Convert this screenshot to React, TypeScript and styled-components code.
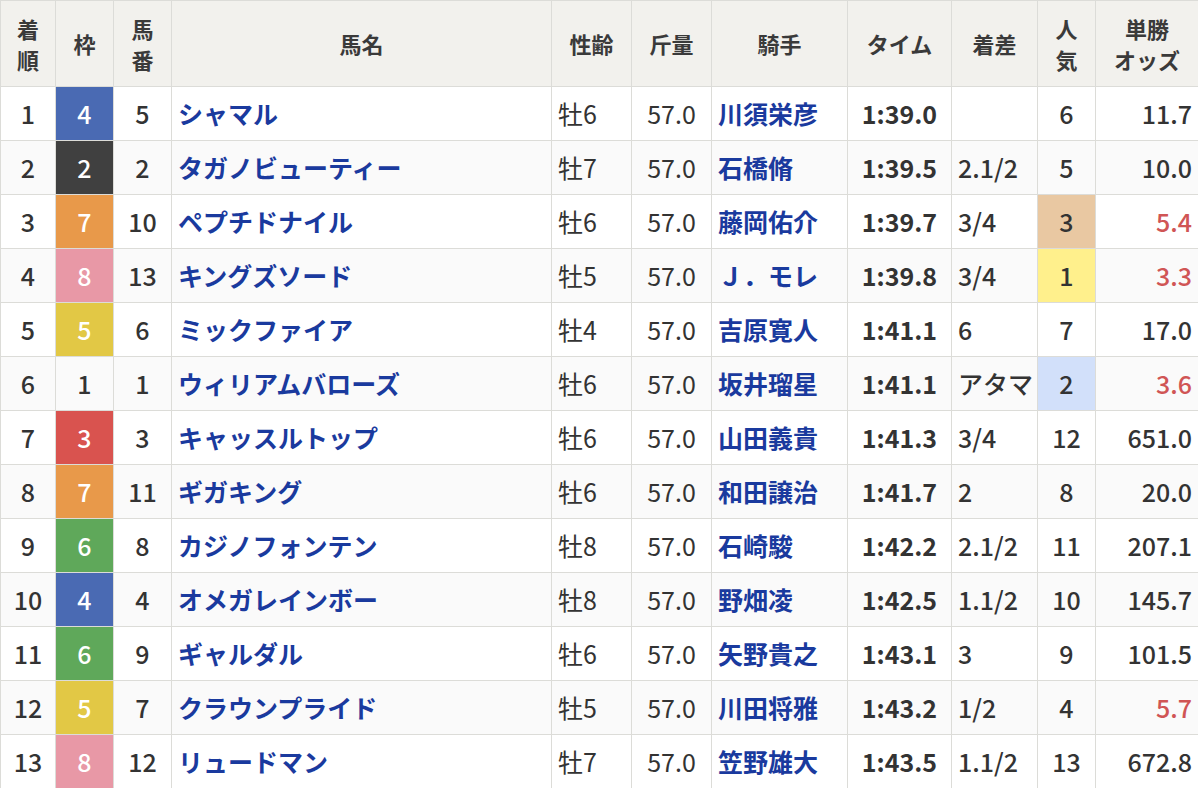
import React from 'react';
import styled, { createGlobalStyle } from 'styled-components';

const GlobalStyle = createGlobalStyle`
  body {
    margin: 0;
    background: #fff;
    font-family: "Noto Sans CJK JP", "Noto Sans", sans-serif;
    color: #333;
  }
`;

const Table = styled.table`
  width: 1198px;
  border-collapse: collapse;
  table-layout: fixed;
`;

const Th = styled.th`
  background: #f2f1ed;
  border: 1px solid #dcdcd8;
  height: 85px;
  font-size: 22px;
  font-weight: 700;
  line-height: 31px;
  color: #3a3a3a;
  text-align: center;
  padding: 0;
`;

const Row = styled.tr<{ $odd: boolean }>`
  background: ${(p) => (p.$odd ? '#fff' : '#fafafa')};
`;

const Td = styled.td<{ $align?: string; $weight?: number; $blue?: boolean; $bg?: string; $fg?: string }>`
  border: 1px solid #dcdcd8;
  height: 53px;
  padding: 0 6px;
  font-size: 25px;
  line-height: 1;
  text-align: ${(p) => p.$align || 'center'};
  font-weight: ${(p) => p.$weight || 500};
  color: ${(p) => p.$fg || (p.$blue ? '#1a3a9e' : '#333')};
  background: ${(p) => p.$bg || 'transparent'};
  white-space: nowrap;
  overflow: hidden;
`;

const wakuColor: Record<number, [string, string]> = {
  1: ['transparent', '#333'],
  2: ['#404040', '#fff'],
  3: ['#d9534f', '#fff'],
  4: ['#4a6ab3', '#fff'],
  5: ['#e2c845', '#fff'],
  6: ['#5fa85a', '#fff'],
  7: ['#e8994a', '#fff'],
  8: ['#e898a6', '#fff'],
};

const popColor: Record<number, string> = { 1: '#fff08c', 2: '#d2e0fa', 3: '#e9c8a2' };

const rows: [number, number, string, string, string, string, string, number, string][] = [
  [4, 5, 'シャマル', '牡6', '川須栄彦', '1:39.0', '', 6, '11.7'],
  [2, 2, 'タガノビューティー', '牡7', '石橋脩', '1:39.5', '2.1/2', 5, '10.0'],
  [7, 10, 'ペプチドナイル', '牡6', '藤岡佑介', '1:39.7', '3/4', 3, '5.4'],
  [8, 13, 'キングズソード', '牡5', 'Ｊ．モレ', '1:39.8', '3/4', 1, '3.3'],
  [5, 6, 'ミックファイア', '牡4', '吉原寛人', '1:41.1', '6', 7, '17.0'],
  [1, 1, 'ウィリアムバローズ', '牡6', '坂井瑠星', '1:41.1', 'アタマ', 2, '3.6'],
  [3, 3, 'キャッスルトップ', '牡6', '山田義貴', '1:41.3', '3/4', 12, '651.0'],
  [7, 11, 'ギガキング', '牡6', '和田譲治', '1:41.7', '2', 8, '20.0'],
  [6, 8, 'カジノフォンテン', '牡8', '石崎駿', '1:42.2', '2.1/2', 11, '207.1'],
  [4, 4, 'オメガレインボー', '牡8', '野畑凌', '1:42.5', '1.1/2', 10, '145.7'],
  [6, 9, 'ギャルダル', '牡6', '矢野貴之', '1:43.1', '3', 9, '101.5'],
  [5, 7, 'クラウンプライド', '牡5', '川田将雅', '1:43.2', '1/2', 4, '5.7'],
  [8, 12, 'リュードマン', '牡7', '笠野雄大', '1:43.5', '1.1/2', 13, '672.8'],
];

const widths = [55, 58, 58, 380, 80, 80, 136, 104, 86, 58, 103];

export default function App() {
  return (
    <>
      <GlobalStyle />
      <Table>
        <colgroup>
          {widths.map((w, i) => (
            <col key={i} style={{ width: w }} />
          ))}
        </colgroup>
        <thead>
          <tr>
            <Th>着<br />順</Th>
            <Th>枠</Th>
            <Th>馬<br />番</Th>
            <Th>馬名</Th>
            <Th>性齢</Th>
            <Th>斤量</Th>
            <Th>騎手</Th>
            <Th>タイム</Th>
            <Th>着差</Th>
            <Th>人<br />気</Th>
            <Th>単勝<br />オッズ</Th>
          </tr>
        </thead>
        <tbody>
          {rows.map((r, i) => {
            const [waku, ban, name, sex, jockey, time, diff, pop, odds] = r;
            const [wbg, wfg] = wakuColor[waku];
            return (
              <Row key={i} $odd={i % 2 === 0}>
                <Td>{i + 1}</Td>
                <Td $bg={wbg} $fg={wfg}>{waku}</Td>
                <Td>{ban}</Td>
                <Td $align="left" $weight={700} $blue>{name}</Td>
                <Td $align="left" $weight={400}>{sex}</Td>
                <Td $weight={400}>{'57.0'}</Td>
                <Td $align="left" $weight={700} $blue>{jockey}</Td>
                <Td $weight={600}>{time}</Td>
                <Td $align="left">{diff}</Td>
                <Td $bg={popColor[pop]}>{pop}</Td>
                <Td $align="right" $fg={pop <= 4 ? '#d05555' : undefined}>{odds}</Td>
              </Row>
            );
          })}
        </tbody>
      </Table>
    </>
  );
}
